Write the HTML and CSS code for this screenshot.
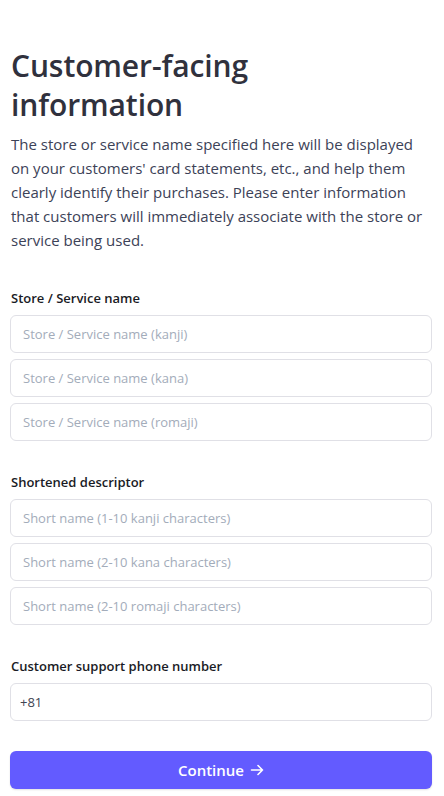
FILE: index.html
```html
<!DOCTYPE html>
<html lang="en">
<head>
<meta charset="utf-8">
<title>Customer-facing information</title>
<link rel="stylesheet" href="styles.css">
</head>
<body>
<main class="page">
  <h1 class="title">Customer-facing information</h1>
  <p class="intro">The store or service name specified here will be displayed on your customers' card statements, etc., and help them clearly identify their purchases. Please enter information that customers will immediately associate with the store or service being used.</p>

  <section class="group">
    <label class="label">Store / Service name</label>
    <div class="fields">
      <input class="field" type="text" placeholder="Store / Service name (kanji)">
      <input class="field" type="text" placeholder="Store / Service name (kana)">
      <input class="field" type="text" placeholder="Store / Service name (romaji)">
    </div>
  </section>

  <section class="group">
    <label class="label">Shortened descriptor</label>
    <div class="fields">
      <input class="field" type="text" placeholder="Short name (1-10 kanji characters)">
      <input class="field" type="text" placeholder="Short name (2-10 kana characters)">
      <input class="field" type="text" placeholder="Short name (2-10 romaji characters)">
    </div>
  </section>

  <section class="group">
    <label class="label">Customer support phone number</label>
    <div class="fields">
      <input class="field phone" type="tel" value="+81">
    </div>
  </section>

  <button class="continue" type="button">Continue
    <svg class="arrow" width="14" height="14" viewBox="0 0 14 14" fill="none" stroke="currentColor" stroke-width="1.6" stroke-linecap="round" stroke-linejoin="round"><path d="M1.5 7h11M8 2.5 12.5 7 8 11.5"/></svg>
  </button>
</main>
</body>
</html>
```

FILE: styles.css
```css
* { box-sizing: border-box; }
html, body { margin: 0; padding: 0; background: #fff; }
body { font-family: "Open Sans", "Noto Sans", sans-serif; color: #30313d; }
.page {
  padding: 46px 12px 20px 10px;
  display: flex;
  flex-direction: column;
}
.title {
  margin: 0 0 0 1px;
  max-width: 320px;
  font-size: 30px;
  line-height: 39px;
  font-weight: 600;
  color: #30313d;
  letter-spacing: -0.1px;
}
.intro {
  margin: 8px 0 0 1px;
  font-size: 15px;
  line-height: 24px;
  color: #3c4257;
}
.group {
  margin-top: 36px;
  display: flex;
  flex-direction: column;
}
.group + .group { margin-top: 31px; }
.label {
  margin-left: 1px;
  font-size: 13px;
  line-height: 20px;
  font-weight: 600;
  color: #1a1b25;
  margin-bottom: 7px;
}
.fields {
  display: flex;
  flex-direction: column;
  gap: 6px;
}
.field {
  height: 38px;
  width: 100%;
  border: 1px solid #e0e0e6;
  border-radius: 6px;
  padding: 0 12px;
  font-family: inherit;
  font-size: 13px;
  color: #30313d;
  background: #fff;
  outline: none;
}
.field::placeholder { color: #a3acba; }
.field.phone { padding-left: 9px; color: #414552; }
.continue {
  margin-top: 30px;
  height: 38px;
  width: 100%;
  border: none;
  border-radius: 6px;
  background: #635bff;
  color: #fff;
  font-family: inherit;
  font-size: 15px;
  font-weight: 600;
  display: flex;
  align-items: center;
  justify-content: center;
  gap: 6px;
  box-shadow: 0 1px 2px rgba(0,0,0,0.12);
}
.arrow { display: block; }
```
